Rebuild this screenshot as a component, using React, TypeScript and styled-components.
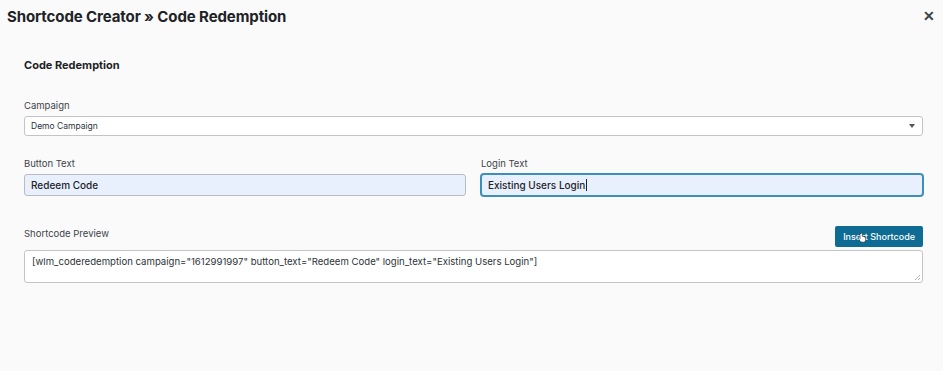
import React from 'react'
import styled, { createGlobalStyle } from 'styled-components'

const GlobalStyle = createGlobalStyle`
  html, body {
    margin: 0;
    padding: 0;
    background: #fafafa;
    font-family: Inter, "Open Sans", "Liberation Sans", sans-serif;
    color: #1d2327;
  }
`

const Modal = styled.div`
  width: 943px;
  height: 371px;
  background: #fafafa;
  display: flex;
  flex-direction: column;
`

const Header = styled.div`
  height: 32px;
  display: flex;
  align-items: center;
  justify-content: space-between;
  padding: 0 8px 0 7px;
`

const Title = styled.h1`
  margin: 0;
  font-size: 15px;
  font-weight: 700;
  letter-spacing: -0.1px;
  color: #1d2327;
`

const Close = styled.button`
  border: 0;
  background: none;
  padding: 0;
  font-size: 14px;
  font-weight: 700;
  line-height: 1;
  color: #3c434a;
  cursor: pointer;
`

const Body = styled.div`
  padding: 26px 20px 0 24px;
  display: flex;
  flex-direction: column;
`

const Heading = styled.h2`
  margin: 0 0 28px;
  font-size: 11px;
  font-weight: 700;
  color: #1d2327;
`

const Label = styled.label<{ $gap?: number }>`
  display: block;
  font-size: 9.5px;
  color: #3c434a;
  margin-bottom: ${p => p.$gap ?? 5}px;
`

const Field = styled.div<{ $gap?: number; $top?: number }>`
  margin-top: ${p => p.$top ?? 0}px;
  margin-bottom: ${p => p.$gap ?? 0}px;
`

const Select = styled.div`
  height: 20px;
  box-sizing: border-box;
  border: 1px solid #c3c4c7;
  border-radius: 3px;
  background: #fff;
  display: flex;
  align-items: center;
  justify-content: space-between;
  padding: 0 7px 0 6px;
  font-size: 8.5px;
  color: #2c3338;
`

const Caret = styled.span`
  width: 0;
  height: 0;
  border-left: 3px solid transparent;
  border-right: 3px solid transparent;
  border-top: 4px solid #50575e;
`

const Row = styled.div`
  display: grid;
  grid-template-columns: 1fr 1fr;
  gap: 15px;
`

const Input = styled.div<{ $focused?: boolean }>`
  height: 22px;
  box-sizing: border-box;
  background: #e8f0fe;
  border: 1px solid ${p => (p.$focused ? '#3d8eb9' : '#b8bcc2')};
  box-shadow: ${p => (p.$focused ? '0 0 0 1px #3d8eb9' : 'none')};
  border-radius: 3px;
  display: flex;
  align-items: center;
  padding: 0 6px;
  font-size: 10px;
  font-weight: 500;
  color: #1d2327;
`

const Cursor = styled.span`
  display: inline-block;
  width: 1px;
  height: 12px;
  background: #1d2327;
  margin-left: 1px;
`

const PreviewHead = styled.div`
  display: flex;
  align-items: flex-end;
  justify-content: space-between;
  margin-bottom: 3px;
`

const Button = styled.button`
  position: relative;
  height: 21px;
  padding: 0 8px;
  border: 0;
  border-radius: 2px;
  background: #0e6b93;
  color: #fff;
  font-family: inherit;
  font-size: 9px;
  font-weight: 500;
  cursor: pointer;
`

const Hand = styled.svg`
  position: absolute;
  left: 22px;
  top: 6px;
`

const Textarea = styled.div`
  position: relative;
  height: 33px;
  box-sizing: border-box;
  border: 1px solid #c3c4c7;
  border-radius: 3px;
  background: #fff;
  padding: 5px 7px;
  font-size: 9.6px;
  color: #2c3338;
`

const Grip = styled.svg`
  position: absolute;
  right: 1px;
  bottom: 1px;
`

export default function App() {
  return (
    <>
      <GlobalStyle />
      <Modal>
        <Header>
          <Title>Shortcode Creator » Code Redemption</Title>
          <Close>✕</Close>
        </Header>
        <Body>
          <Heading>Code Redemption</Heading>
          <Field $gap={22}>
            <Label>Campaign</Label>
            <Select>
              Demo Campaign
              <Caret />
            </Select>
          </Field>
          <Row>
            <Field>
              <Label>Button Text</Label>
              <Input>Redeem Code</Input>
            </Field>
            <Field>
              <Label>Login Text</Label>
              <Input $focused>
                Existing Users Login
                <Cursor />
              </Input>
            </Field>
          </Row>
          <Field $top={30}>
            <PreviewHead>
              <Label $gap={8}>Shortcode Preview</Label>
              <Button>
                Insert Shortcode
                <Hand width="10" height="11" viewBox="0 0 10 11">
                  <path
                    d="M3 1.5v5l-1-1c-.5-.4-1.2 0-.9.6L3 9c.4.7 1 1.2 2 1.2h1.5c1.3 0 2.2-1 2.2-2.2V5.5c0-.5-.8-.5-.8 0V5c0-.5-.8-.5-.8 0v-.4c0-.5-.8-.5-.8 0V4.3c0-.5-.9-.5-.9 0V1.5c0-.6-1.2-.6-1.2 0z"
                    fill="#fff"
                    stroke="#222"
                    strokeWidth="0.6"
                  />
                </Hand>
              </Button>
            </PreviewHead>
            <Textarea>
              [wlm_coderedemption campaign="1612991997" button_text="Redeem Code" login_text="Existing Users Login"]
              <Grip width="7" height="7" viewBox="0 0 7 7">
                <path d="M6 1L1 6M6 4L4 6" stroke="#a7aaad" strokeWidth="0.8" />
              </Grip>
            </Textarea>
          </Field>
        </Body>
      </Modal>
    </>
  )
}
